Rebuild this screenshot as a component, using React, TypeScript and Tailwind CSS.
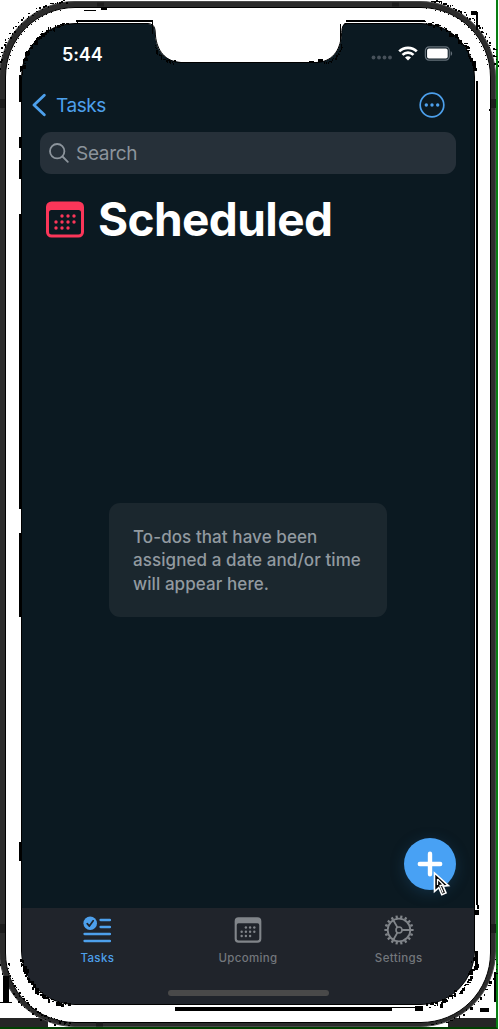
import React from "react";

type Rect = [number, number, number, number];

const edgeMarks: Rect[] = [
  [19, 75, 2, 27], [19, 137, 2, 11], [19, 160, 2, 19], [19, 214, 2, 295],
  [19, 533, 2, 84], [19, 842, 2, 19],
  [76, 20, 77, 2], [346, 20, 79, 2],
  [476, 81, 2, 824], [475, 910, 4, 5], [475, 951, 3, 18], [477, 905, 2, 4],
  [175, 1007, 217, 4], [391, 1007, 24, 1], [415, 1006, 8, 5],
  [84, 10, 12, 1], [101, 8, 6, 2], [383, 7, 20, 1], [431, 1, 11, 1],
  [3, 976, 6, 26], [0, 1002, 12, 1], [480, 1008, 9, 4], [494, 972, 2, 30],
  [471, 11, 6, 4], [476, 12, 2, 18], [489, 109, 1, 2],
  [174, 60, 2, 2], [168, 60, 2, 1], [309, 61, 5, 1], [318, 59, 5, 3],
  [152, 21, 1, 13], [340, 24, 1, 17], [77, 20, 1, 4],
];

function makeSpeckles(): Rect[] {
  const out: Rect[] = [];
  let seed = 17;
  const rand = () => {
    seed = (seed * 16807) % 2147483647;
    return seed / 2147483647;
  };
  const arc = (cx: number, cy: number, rx: number, ry: number, from: number, n: number, spread: number, size: number) => {
    for (let i = 0; i < n; i++) {
      const a = ((from + (i / n) * 80 + 5) * Math.PI) / 180;
      const d = rand() * spread;
      out.push([
        Math.round(cx + Math.cos(a) * (rx + d)),
        Math.round(cy + Math.sin(a) * (ry + d)),
        1 + Math.floor(rand() * size),
        1 + Math.floor(rand() * size),
      ]);
    }
  };
  arc(74, 76, 52, 52, 180, 42, 3, 4);
  arc(420, 76, 52, 52, 270, 42, 3, 4);
  arc(74, 952, 52, 51, 90, 38, 3, 4);
  arc(420, 952, 52, 51, 0, 42, 5, 4);
  arc(75, 74, 75, 72, 180, 46, 4, 2);
  arc(420, 74, 75, 72, 270, 46, 4, 2);
  arc(75, 954, 67, 67, 90, 36, 2, 2);
  arc(75, 953, 75, 71, 90, 22, 3, 2);
  arc(420, 953, 75, 71, 0, 22, 3, 3);
  arc(75, 74, 67, 66, 180, 20, 1, 1);
  arc(420, 74, 67, 66, 270, 20, 1, 1);
  arc(175, 42, 20, 20, 90, 18, 1, 2);
  arc(321, 42, 20, 20, 0, 18, 1, 2);
  return out;
}

const speckles = makeSpeckles();

function CalendarIcon({ className }: { className?: string }) {
  const dots = [[15, 14], [21, 14], [27, 14], [9, 20], [15, 20], [21, 20], [27, 20], [9, 26], [15, 26], [21, 26]];
  return (
    <svg viewBox="0 0 39 37" className={className} fill="currentColor">
      <path fillRule="evenodd" d="M6 .5h27a5.5 5.5 0 0 1 5.5 5.5v25a5.5 5.5 0 0 1-5.5 5.5H6A5.5 5.5 0 0 1 .5 31V6A5.5 5.5 0 0 1 6 .5ZM6 9a2.5 2.5 0 0 0-2.5 2.5V31A2.5 2.5 0 0 0 6 33.5h27a2.5 2.5 0 0 0 2.5-2.5V11.500A2.500 2.500 0 0 0 33 9Z" />
      {dots.map(([x, y], i) => <circle key={i} cx={x + 1.5} cy={y + 1} r="1.7" />)}
    </svg>
  );
}

function GearIcon() {
  const teeth = Array.from({ length: 18 }, (_, i) => i * 20);
  return (
    <svg viewBox="-15 -15 30 30" className="size-[30px]" fill="none" stroke="currentColor" strokeWidth="1.8">
      <circle r="11.300" />
      <circle r="3" strokeWidth="1.600" />
      {teeth.map((t) => <path key={t} d="M12 0H14.600" strokeWidth="2.200" transform={`rotate(${t})`} />)}
      <path d="M3 0H11M-1.600-2.600-5.500-9.500M-1.600 2.600-5.500 9.500" />
    </svg>
  );
}

function TaskListIcon() {
  return (
    <svg viewBox="0 0 28 28" className="size-7" fill="none" stroke="currentColor" strokeWidth="2.300" strokeLinecap="round">
      <circle cx="7.200" cy="7.300" r="6.800" fill="currentColor" stroke="none" />
      <path d="m4.200 7.600 2.200 2.500 3.800-5.300" stroke="#20242b" strokeWidth="1.700" strokeLinejoin="round" />
      <path d="M17.500 4H27M17.500 11H27M1.500 18H27M1.500 25H27" />
    </svg>
  );
}

function StatusIcons() {
  return (
    <div className="flex items-center pt-px">
      <svg viewBox="0 0 22 5" className="mt-[9px] mr-[5px] h-[5px] w-[22px]" fill="#47515a">
        {[2.500, 8, 13.500, 19].map((x) => <circle key={x} cx={x} cy="2.500" r="1.900" />)}
      </svg>
      <svg viewBox="0 0 20 15" className="mr-[6px] h-[15px] w-5" fill="none" stroke="white" strokeWidth="2.700">
        <path d="M1.200 5.400a12.600 12.600 0 0 1 17.600 0M4.500 8.900a7.800 7.800 0 0 1 11 0" />
        <path d="M10 14.500 7 11.600a4.300 4.300 0 0 1 6 0Z" fill="white" stroke="none" />
      </svg>
      <svg viewBox="0 0 30 16" className="mt-px h-[15px] w-[29px]">
        <rect x="1" y="1" width="25.500" height="14" rx="4" fill="none" stroke="#66717a" strokeWidth="1.300" />
        <rect x="2.800" y="2.700" width="22" height="10.600" rx="2" fill="white" />
        <path d="M28 5.500v5c1-.4 1.500-1.300 1.500-2.500S29 5.900 28 5.500Z" fill="#66717a" />
      </svg>
    </div>
  );
}

function Tab({ label, icon, active }: { label: string; icon: React.ReactNode; active?: boolean }) {
  return (
    <div className={`flex flex-1 flex-col items-center ${active ? "text-[#4da0ec]" : "text-[#81858a]"}`}>
      <div className="flex h-[30px] items-center">{icon}</div>
      <span className={`mt-[4px] text-[11.500px] leading-[18px] font-medium tracking-[0.35px] ${active ? "" : "text-[#73777c]"}`}>{label}</span>
    </div>
  );
}

export default function App() {
  return (
    <div className="relative h-[1029px] w-[499px] overflow-hidden bg-white font-['Inter','Liberation_Sans',sans-serif]">
      <div className="mr-px flex h-full flex-col justify-end border-r-2 border-b-2 border-r-[#087d12] border-b-[#003f00]">
        <div className="flex h-[9px] justify-between">
          <div className="w-12 bg-[#252525]" />
          <div className="w-12 bg-[#252525]" />
        </div>
      </div>

      <div className="absolute top-px left-[-1px] h-[1026px] w-[497px] rounded-[76px] border border-[#4a4a4a] bg-[#2c2c2c] pt-[5px] pr-[4px] pb-[3px] pl-[5px]">
        <div className="h-full rounded-[70px] border border-black bg-white pt-[15px] pl-[15px]">
          <main className="flex h-[982px] w-[454px] flex-col overflow-hidden rounded-[54px] border border-black bg-[#0b1921]">
            <header className="flex h-[60px] shrink-0 items-start justify-between pt-[20px] pr-[21px] pl-[40px]">
              <span className="pt-px text-[18px] leading-5 font-semibold tracking-[-0.1px] text-white">5:44</span>
              <StatusIcons />
            </header>
            <nav className="flex h-[48px] shrink-0 items-start justify-between pr-[29px] pl-[10px] text-[#4da0ec]">
              <div className="flex h-[41px] items-center gap-[10px]">
                <svg viewBox="0 0 14 24" className="h-6 w-[14px]" fill="none" stroke="currentColor" strokeWidth="2.800" strokeLinecap="round" strokeLinejoin="round">
                  <path d="M12.300 2.200 2 12l10.300 9.800" />
                </svg>
                <span className="pt-[3px] text-[19px] leading-6 tracking-[-0.450px]">Tasks</span>
              </div>
              <svg viewBox="0 0 26 26" className="mt-[8px] size-[26px]" fill="none" stroke="currentColor" strokeWidth="1.700">
                <circle cx="13" cy="13" r="11.800" />
                <g fill="currentColor" stroke="none"><circle cx="7.300" cy="13" r="1.700" /><circle cx="13" cy="13" r="1.700" /><circle cx="18.700" cy="13" r="1.700" /></g>
              </svg>
            </nav>
            <div className="mx-[18px] flex h-[42px] shrink-0 items-center rounded-[11px] bg-[#263039] pl-[9px] text-[#8c949c]">
              <svg viewBox="0 0 20 20" className="mr-[7px] size-5" fill="none" stroke="currentColor" strokeWidth="1.800" strokeLinecap="round">
                <circle cx="8.200" cy="8.200" r="7.200" /><path d="m13.500 13.500 5.300 5.300" />
              </svg>
              <span className="pt-[2px] text-[19px] leading-6 tracking-[-0.300px]">Search</span>
            </div>
            <div className="mt-[17px] flex h-14 shrink-0 items-center pl-[23px]">
              <CalendarIcon className="mr-[13px] h-[37px] w-[40px] text-[#fb3659]" />
              <h1 className="text-[46px] leading-none font-bold tracking-[-0.600px] text-white">Scheduled</h1>
            </div>
            <section className="mt-[256px] ml-[87px] flex h-[114px] w-[278px] shrink-0 items-center rounded-[11px] bg-[#1b272e] pt-[2px] pl-6">
              <p className="text-[17px] leading-[23.300px] font-medium tracking-[0.080px] whitespace-pre text-[#929aa0]">{"To-dos that have been\nassigned a date and/or time\nwill appear here."}</p>
            </section>
            <div className="mt-[221px] mr-[18px] flex size-[52px] shrink-0 items-center justify-center self-end rounded-full bg-[#48a1f4] shadow-[0_3px_14px_rgba(31,88,132,0.35)]">
              <svg viewBox="0 0 26 26" className="size-[26px]" stroke="white" strokeWidth="4.400" strokeLinecap="round"><path d="M13 2.800v20.400M2.800 13h20.400" /></svg>
            </div>
            <footer className="mt-[18px] flex flex-1 flex-col bg-[#20242b]">
              <div className="flex h-[85px] pt-[7px]">
                <Tab label="Tasks" active icon={<TaskListIcon />} />
                <Tab label="Upcoming" icon={<CalendarIcon className="h-[26px] w-7" />} />
                <Tab label="Settings" icon={<GearIcon />} />
              </div>
              <div className="mt-[-3px] h-[6px] w-[161px] self-center rounded-full bg-[#494949]" />
            </footer>
          </main>
        </div>
      </div>

      <svg className="pointer-events-none absolute inset-0" width="499" height="1029" viewBox="0 0 499 1029">
        <path d="M148 22H348C342 23 342 27 342 34 340 52 332 62 316 62H181C164 61 156 50 155 34 155 28 154 24 148 24Z" fill="white" />
        <path d="M148 23.500C156 24 155 31 155.500 36 157 50 165 62 181 62.500H316C332 62 340 51 341.500 35 342 28 342 24 348 23.500" fill="none" stroke="black" />
        <path d="M0 103.500H5M491 103.500h5M0 928.500H5M491 928.500h5" stroke="#1c1c1c" strokeWidth="9" />
        <path d="M97 4.500h7M392 4.500h7M96 1024.500h7" stroke="#1c1c1c" strokeWidth="4" />
        <g fill="black" shapeRendering="crispEdges">
          {[...edgeMarks, ...speckles].map(([x, y, w, h], i) => <rect key={i} x={x} y={y} width={w} height={h} />)}
        </g>
        <path d="M434.500 873v18.500l4.300-3.800 3 7 4.200-1.800-3-6.700 5.500-.6Z" fill="black" stroke="white" strokeWidth="1.600" />
        <path d="m437.500 879 6 6-3.500.5 3 7M437.500 879v6" fill="none" stroke="white" strokeWidth="1.300" />
      </svg>
    </div>
  );
}
